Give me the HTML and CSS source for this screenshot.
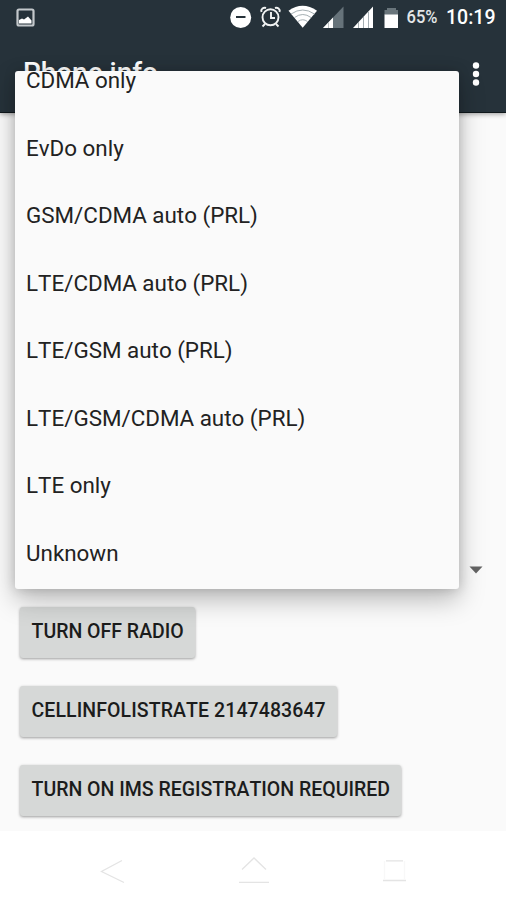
FILE: index.html
```html
<!DOCTYPE html>
<html lang="en">
<head>
<meta charset="utf-8">
<title>Phone info</title>
<link rel="stylesheet" href="styles.css">
</head>
<body>
<div class="screen">
  <header class="appbar">
    <div class="status">
      <svg class="picture" width="20" height="20" viewBox="0 0 20 20"><rect x="1.5" y="1.5" width="16" height="16" rx="1.5" fill="#26323a" stroke="#c3c8cb" stroke-width="2.2"/><path d="M3 15.500V12l3-1.500 2 1 4-3 3.500 4v3z" fill="#fff"/></svg>
      <div class="indicators">
        <svg width="276" height="34" viewBox="230 0 276 34" class="icons">
          <circle cx="240.700" cy="17.500" r="10.500" fill="#fff"/><path d="M236 17h9.500" stroke="#26323a" stroke-width="2"/>
          <g fill="none" stroke="#f1f3f3" stroke-width="1.900"><circle cx="270.500" cy="17.300" r="8"/><path d="M271 12v6l4 0M261.500 12c-1-3 2-5 4.500-4M279.500 12c1-3-2-5-4.500-4M265 24l-2.500 2.500M276 24l2.500 2.500"/></g>
          <path d="M288.500 10.800Q302.500 .8 317 10.800L302.700 27.800Z" fill="#fff"/><path d="M291 14q11.700-8 23.500 0M294.500 17.500q8.300-6 16.500 0M298 21.500q4.700-3.500 9.500 0" fill="none" stroke="#a5afb3" stroke-width="1"/>
          <path d="M343.500 6.500V28H323z" fill="#66737a"/><path d="M333 17.500V28H323z" fill="#fff"/><path d="M328.500 22v6" stroke="#bbc2c5" stroke-width="1"/>
          <path d="M373 6.500V28H353z" fill="#fff"/><path d="M358.500 22v6M363.500 17v11M368.500 12v16" stroke="#a5afb3" stroke-width="1"/>
          <path d="M387 8h9v2h2v5h-13.500v-5H387z" fill="#69757b"/><path d="M384.500 14.500H398V28h-13.500z" fill="#fff"/>
          <text class="battery" x="406.500" y="23" textLength="31" lengthAdjust="spacingAndGlyphs">65%</text>
          <text class="clock" x="446" y="23.500" textLength="49.500" lengthAdjust="spacingAndGlyphs">10:19</text>
        </svg>
      </div>
    </div>
    <div class="toolbar">
      <h1>Phone info</h1>
      <svg class="more" width="10" height="28" viewBox="0 0 10 28" fill="#fff"><circle cx="5" cy="5.500" r="3.200"/><circle cx="5" cy="14" r="3.200"/><circle cx="5" cy="22.500" r="3.200"/></svg>
    </div>
  </header>
  <main class="content">
    <div class="spinner"><svg width="14" height="8" viewBox="0 0 14 8"><path d="M.5.500h13L7 7.500z" fill="#636363"/></svg></div>
    <button>TURN OFF RADIO</button>
    <button class="rate">CELLINFOLISTRATE 2147483647</button>
    <button>TURN ON IMS REGISTRATION REQUIRED</button>
  </main>
  <nav class="navbar">
    <svg width="506" height="69" viewBox="0 831 506 69" fill="none" stroke="#e4e4e4" stroke-width="1.300"><path d="M122 860.500L101.500 871.500 124 882.500M242 869.500l12-11.500 12 11.500M239 882.300h30M386 860.800h17M383 880.500h23"/><path d="M384.500 861v19M404.500 861v19" stroke="#f8f8f8"/></svg>
  </nav>
  <ul class="menu">
    <li>CDMA only</li>
    <li>EvDo only</li>
    <li>GSM/CDMA auto (PRL)</li>
    <li>LTE/CDMA auto (PRL)</li>
    <li>LTE/GSM auto (PRL)</li>
    <li>LTE/GSM/CDMA auto (PRL)</li>
    <li>LTE only</li>
    <li>Unknown</li>
  </ul>
</div>
</body>
</html>
```
FILE: styles.css
```css
* { box-sizing: border-box; }
body { margin: 0; font-family: Roboto, "Liberation Sans", sans-serif; }
.screen { position: relative; width: 506px; height: 900px; display: flex; flex-direction: column; overflow: hidden; background: #fafafa; }
.appbar { flex: none; height: 113px; background: #26323a; border-bottom: 1px solid #10181c; box-shadow: 0 1px 5px rgba(0,0,0,.4); z-index: 1; }
.status { height: 34px; display: flex; justify-content: space-between; padding-left: 16px; }
.picture { margin-top: 8px; }
.icons { display: block; }
.battery { font-size: 18px; font-weight: 500; fill: #e3e6e7; }
.clock { font-size: 20px; font-weight: 500; fill: #fff; }
.toolbar { height: 79px; display: flex; align-items: center; justify-content: space-between; padding: 0 25px 0 23px; }
h1 { margin: 0; font-size: 27.9px; line-height: 32px; padding-bottom: 2px; font-weight: 500; color: #fff; }
.content { height: 718px; flex: none; display: flex; flex-direction: column; align-items: flex-start; padding: 453px 0 0 20px; }
.spinner { flex: none; align-self: flex-end; height: 41px; padding-right: 23px; line-height: 0; }
button { height: 51px; flex: none; margin: 0 0 28px; padding: 0 11.5px 2px; border: 0; border-radius: 3px; background: #d6d8d7; box-shadow: 0 1px 3px rgba(0,0,0,.38); font: 500 19.5px/24px Roboto, sans-serif; font-kerning: none; color: #1b1c1c; }
button:last-child { margin-bottom: 0; }
.rate { letter-spacing: .09px; }
.navbar { height: 69px; background: #fff; }
.navbar svg { display: block; }
.menu { position: absolute; z-index: 2; left: 15px; top: 71px; width: 444px; height: 518px; margin: 0; padding: 0 11px 2px; list-style: none; overflow: hidden; display: flex; flex-direction: column; justify-content: flex-end; background: #fafafa; border-radius: 3px; box-shadow: 0 11px 26px rgba(0,0,0,.26), 0 0 12px rgba(0,0,0,.16); }
li { flex: none; height: 67.5px; line-height: 67px; font-size: 22.4px; font-kerning: none; color: #222; }
```
